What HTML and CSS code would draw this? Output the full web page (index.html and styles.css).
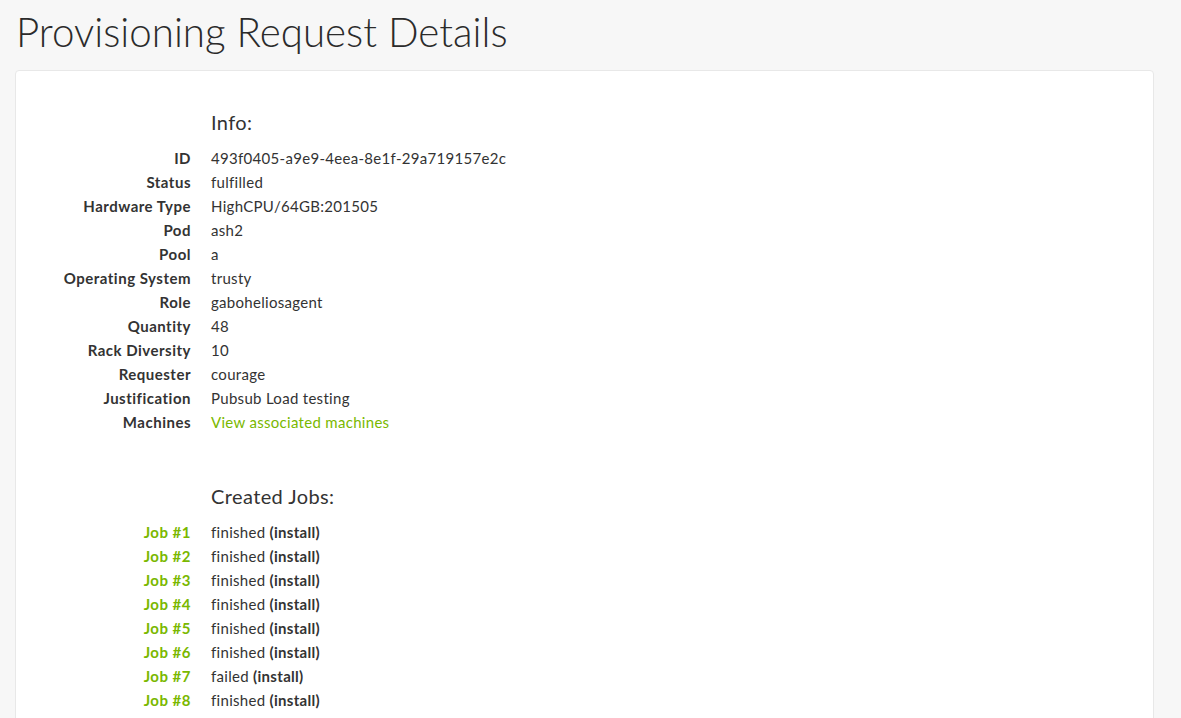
FILE: index.html
```html
<!DOCTYPE html>
<html>
<head>
<meta charset="utf-8">
<title>Provisioning Request Details</title>
<link rel="stylesheet" href="styles.css">
</head>
<body>
<h1 class="page-title">Provisioning Request Details</h1>
<div class="card">
  <section class="section">
    <h3 class="section-title">Info:</h3>
    <dl class="details">
      <dt>ID</dt><dd>493f0405-a9e9-4eea-8e1f-29a719157e2c</dd>
      <dt>Status</dt><dd>fulfilled</dd>
      <dt>Hardware Type</dt><dd>HighCPU/64GB:201505</dd>
      <dt>Pod</dt><dd>ash2</dd>
      <dt>Pool</dt><dd>a</dd>
      <dt>Operating System</dt><dd>trusty</dd>
      <dt>Role</dt><dd>gaboheliosagent</dd>
      <dt>Quantity</dt><dd>48</dd>
      <dt>Rack Diversity</dt><dd>10</dd>
      <dt>Requester</dt><dd>courage</dd>
      <dt>Justification</dt><dd>Pubsub Load testing</dd>
      <dt>Machines</dt><dd><a class="link" href="#">View associated machines</a></dd>
    </dl>
  </section>
  <section class="section section-jobs">
    <h3 class="section-title">Created Jobs:</h3>
    <dl class="details">
      <dt><a class="link" href="#">Job #1</a></dt><dd>finished <b>(install)</b></dd>
      <dt><a class="link" href="#">Job #2</a></dt><dd>finished <b>(install)</b></dd>
      <dt><a class="link" href="#">Job #3</a></dt><dd>finished <b>(install)</b></dd>
      <dt><a class="link" href="#">Job #4</a></dt><dd>finished <b>(install)</b></dd>
      <dt><a class="link" href="#">Job #5</a></dt><dd>finished <b>(install)</b></dd>
      <dt><a class="link" href="#">Job #6</a></dt><dd>finished <b>(install)</b></dd>
      <dt><a class="link" href="#">Job #7</a></dt><dd>failed <b>(install)</b></dd>
      <dt><a class="link" href="#">Job #8</a></dt><dd>finished <b>(install)</b></dd>
    </dl>
  </section>
</div>
</body>
</html>
```

FILE: styles.css
```css
html, body {
  margin: 0;
  padding: 0;
}
body {
  background: #f7f7f7;
  color: #333333;
  font-family: Lato, "Open Sans", sans-serif;
  font-size: 15px;
  overflow: hidden;
}
.page-title {
  margin: 0;
  padding: 8px 0 0 16px;
  height: 70px;
  box-sizing: border-box;
  font-size: 40.3px;
  line-height: 48px;
  font-weight: 300;
  color: #2b2b2b;
}
.card {
  margin-left: 15px;
  width: 1139px;
  box-sizing: border-box;
  background: #ffffff;
  border: 1px solid #e8e8e8;
  border-radius: 4px;
  padding: 39px 0 40px;
  min-height: 700px;
}
.section-title {
  margin: 0 0 12px 195px;
  font-size: 20px;
  line-height: 24px;
  font-weight: 400;
  letter-spacing: 0.4px;
  color: #333333;
}
.section-jobs {
  margin-top: 50px;
}
.details {
  display: grid;
  grid-template-columns: 175px 1fr;
  column-gap: 20px;
  margin: 0;
  line-height: 24px;
  letter-spacing: 0.3px;
}
.details dt {
  text-align: right;
  font-weight: 700;
  letter-spacing: 0.5px;
  color: #333333;
}
.details dd {
  margin: 0;
}
.details b {
  font-weight: 700;
}
.link {
  color: #7ab800;
  text-decoration: none;
}
```
